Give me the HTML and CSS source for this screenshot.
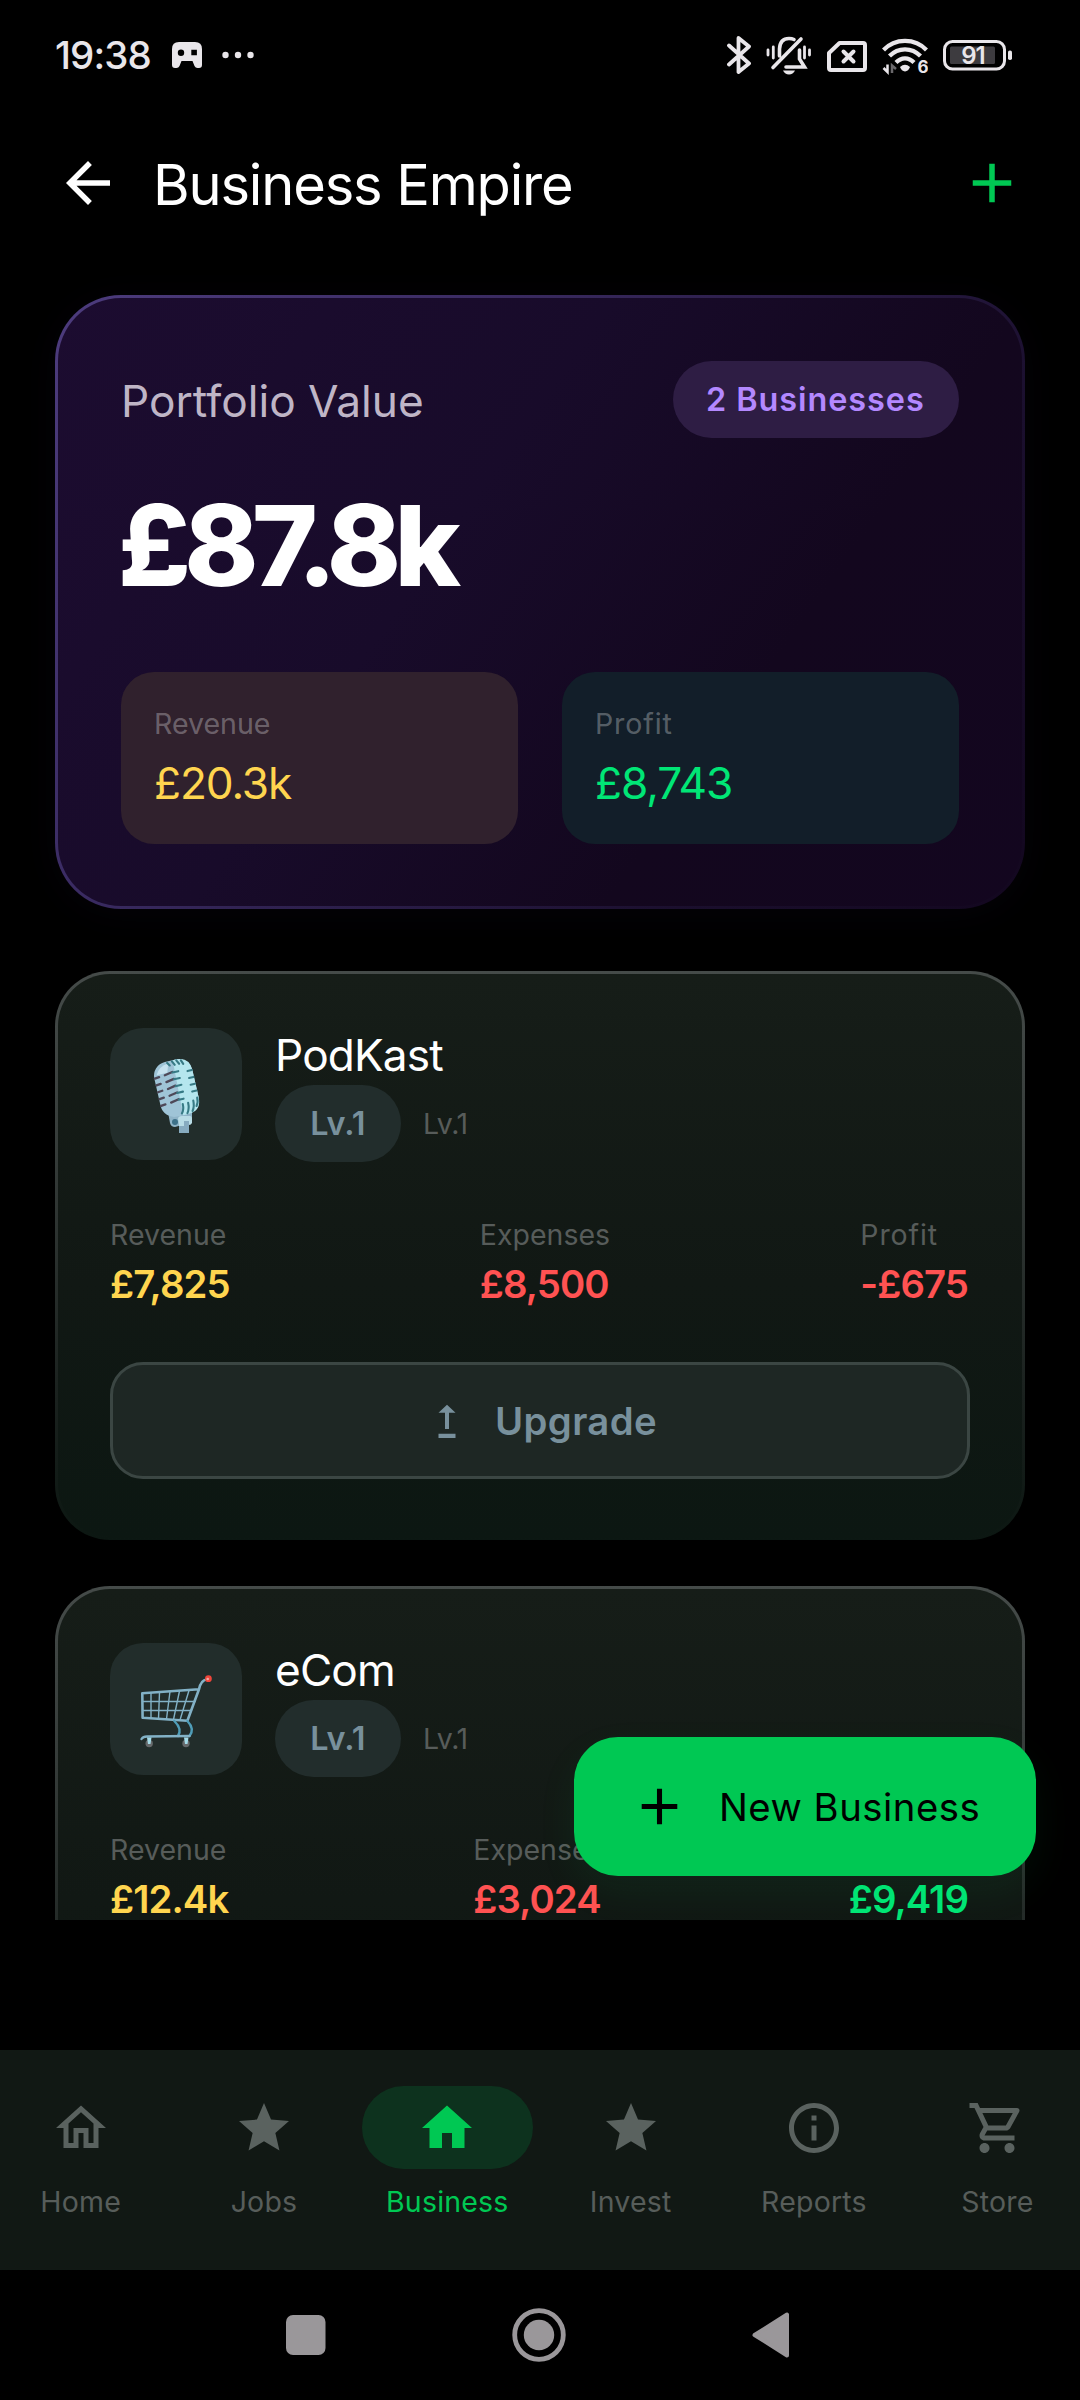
FILE: index.html
```html
<!DOCTYPE html>
<html lang="en">
<head>
<meta charset="utf-8">
<title>Business Empire</title>
<link rel="stylesheet" href="styles.css">
</head>
<body>
<div class="phone">
  <div class="status">
    <span class="clock">19:38</span>
    <svg class="game" width="30" height="26" viewBox="0 0 30 26"><path fill="#e9e6ea" fill-rule="evenodd" d="M7 0H23Q30 0 30 7V23Q30 26 27 26H25.500Q23.500 26 22.500 24L20.500 19H9.500L7.500 24Q6.500 26 4.500 26H3Q0 26 0 23V7Q0 0 7 0ZM9 7.500A3.200 3.200 0 1 0 9 13.900A3.200 3.200 0 1 0 9 7.500ZM19.300 7.700V13.300H24.900V7.700Z"/></svg>
    <svg width="32" height="8" viewBox="0 0 32 8" fill="#e9e6ea"><circle cx="3.500" cy="4" r="3.200"/><circle cx="16" cy="4" r="3.200"/><circle cx="28.500" cy="4" r="3.200"/></svg>
    <div class="status-right">
      <svg width="24" height="60" viewBox="7 0 24 60" fill="none" stroke="#e9e6ea" stroke-width="3.800" stroke-linejoin="round" stroke-linecap="round"><path d="M9 20.500L29 38.500L18.500 47V13L29 21.500L9 39.500"/></svg>
      <svg width="45" height="60" viewBox="46 0 45 60" fill="none" stroke="#e9e6ea" stroke-width="3.600" stroke-linecap="round"><path d="M53 42.500L81 14M59.500 31V24Q60 13.500 69 13.500Q72 13.500 74 14.500M79.500 25V34L84.500 42H66"/><path stroke-width="2.800" d="M48 25V30M53.300 22V33M84.500 22V33M89.500 25V30"/><path fill="#e9e6ea" stroke="none" d="M63 45.500H75Q73 49.500 69 49.500Q65 49.500 63 45.500Z"/></svg>
      <svg width="41" height="60" viewBox="106 0 41 60" fill="none" stroke="#e9e6ea" stroke-width="4" stroke-linejoin="round" stroke-linecap="round"><path d="M119.500 18H143Q145 18 145 20V43Q145 45 143 45H111Q109 45 109 43V28Z"/><path d="M123.500 26.500L133.500 36.500M133.500 26.500L123.500 36.500"/></svg>
      <svg width="46" height="60" viewBox="162 0 46 60" fill="none" stroke="#e9e6ea" stroke-width="4.200"><path d="M163.500 25Q172 15.800 185 15.800Q198 15.800 206.500 25M169.500 31Q176 24.300 185 24.300Q194 24.300 200.500 31M176 37.500Q180 33.300 185 33.300Q190 33.300 194 37.500"/><path fill="#e9e6ea" stroke="none" d="M180 42Q185 37.500 190 42Q188.500 46 185 46.500Q181.500 46 180 42Z"/><path stroke-width="2.500" d="M167.500 39.500V47L163.500 43"/><path stroke="#6a686b" stroke-width="2.500" d="M172 48V40.500L176 44"/><text class="wifi6" x="197.500" y="47.500">6</text></svg>
      <svg width="70" height="60" viewBox="223 0 70 60"><rect x="224.500" y="16.500" width="60" height="27.500" rx="8" fill="none" stroke="#e9e6ea" stroke-width="3"/><rect x="230" y="21.500" width="45" height="17.500" rx="1.500" fill="#3d3b3f"/><rect x="288" y="25.500" width="4" height="9.500" rx="1.800" fill="#e9e6ea"/><text class="batt" x="253" y="39">91</text></svg>
    </div>
  </div>

  <header class="topbar">
    <svg width="66" height="66" viewBox="0 0 24 24" fill="#fff"><path d="M20 11H7.830l5.590-5.590L12 4l-8 8 8 8 1.410-1.410L7.830 13H20z"/></svg>
    <h1 class="title">Business Empire</h1>
    <svg width="66" height="66" viewBox="0 0 24 24" fill="#00c853"><path d="M19 13h-6v6h-2v-6H5v-2h6V5h2v6h6z"/></svg>
  </header>

  <main class="scroll">
    <section class="portfolio">
      <div class="pf-head"><span class="pf-label">Portfolio Value</span><span class="pf-pill">2 Businesses</span></div>
      <div class="pf-value">£87.8k</div>
      <div class="tiles">
        <div class="tile gold"><span class="label">Revenue</span><span class="amount">£20.3k</span></div>
        <div class="tile mint"><span class="label loose">Profit</span><span class="amount">£8,743</span></div>
      </div>
    </section>

    <section class="card">
      <div class="biz">
        <div class="biz-icon">
          <svg width="132" height="132" viewBox="0 0 132 132">
            <path d="M58 84L60 95Q61 99 65 99L72 97V91H82V84Z" fill="#8fb4c8"/>
            <path d="M68 91Q68 88 72 88H80Q82 88 82 91V95Q81 97 79 97V105H69V97Z" fill="#b9dce6"/><path d="M74 93H79V105H69V98H74Z" fill="#87abc0"/><circle cx="65" cy="94" r="3" fill="#3d7189"/>
            <g transform="rotate(-13 66.500 60)">
              <rect x="47" y="32" width="39" height="56" rx="14" fill="#9fc4d7"/>
              <path d="M69 32H72Q86 32 86 46V74Q86 88 72 88H67Z" fill="#b5e6ee"/>
              <path d="M50 43Q54 35 64 34L61 43Z" fill="#c6e2ef"/>
              <g stroke="#4e4858" stroke-width="2.300" stroke-linecap="round"><path d="M47.500 46L52 45.500M47.500 53L52 52.500M47.500 60L52 59.500M47.500 67L52 66.500M47.500 74L52 73.500M58 45L66 43.500M58 52L66 50.500M58 59L66 57.500M58 66L66 64.500M58 73L66 71.500"/></g>
              <g stroke="#377a85" stroke-width="2.100" stroke-linecap="round" fill="none"><path d="M66 44H72M66 51H72M66 58H72M66 65H72M66 72H71M81 46H85.500M81 53H85.500M81 60H85.500M81 67H85.500M68 33L70 37M72.500 33L74.500 37M77 34L78.500 38M63 33.500L65 36.500M66 86Q69 83 69 77M71.500 87Q74.500 83 74.500 77M77 86Q80 82 80 76M82 82Q84.500 79 84.500 74"/></g>
            </g>
          </svg>
        </div>
        <div class="biz-text"><span class="name">PodKast</span><div class="levels"><span class="lv-pill">Lv.1</span><span class="lv">Lv.1</span></div></div>
      </div>
      <div class="stats">
        <div class="stat"><span class="label">Revenue</span><span class="num yellow">£7,825</span></div>
        <div class="stat"><span class="label">Expenses</span><span class="num red">£8,500</span></div>
        <div class="stat"><span class="label loose">Profit</span><span class="num red">-£675</span></div>
      </div>
      <div class="upgrade">
        <svg width="44" height="44" viewBox="0 0 44 44" fill="#78909c"><path d="M22 5.700L30.500 13.700H24V30H20V13.700H13.500ZM13.500 34.800H30.500V39H13.500Z"/></svg>
        <span>Upgrade</span>
      </div>
    </section>

    <section class="card">
      <div class="biz">
        <div class="biz-icon">
          <svg width="132" height="132" viewBox="0 0 132 132" fill="none" stroke="#82b1c6" stroke-linecap="round" stroke-linejoin="round">
            <path stroke-width="2.600" d="M96.500 36.500Q91 37 89 46.300L32.300 50.300L32.600 74.700L77.400 77.700L89 46.300"/>
            <path stroke-width="1.400" d="M41 50V75M49.500 49.500L48.500 75.500M60 48.500L56.500 76M69.500 48L63.500 76.500M79 47.500L70 77M32.500 58.500H85M32.500 67.500H81.500"/>
            <path stroke="#4f9db8" stroke-width="2.400" d="M64.300 78Q72.500 86 68 93M77.400 78Q85 86 79.500 93"/>
            <path stroke-width="2.400" d="M31.500 96Q33 93.500 37 93.500L79.500 93"/>
            <g stroke="none"><circle cx="39.200" cy="100.500" r="3.700" fill="#66696b"/><circle cx="76" cy="100.500" r="3.700" fill="#66696b"/><path fill="#a5dbe8" d="M37 94.500H41.500L40.500 101H38ZM74 94.500H78.500L77.500 101H75Z"/><circle cx="98.400" cy="35.700" r="3.400" fill="#f0453a"/><circle cx="97.700" cy="36" r="1.300" fill="#f3a9a2"/></g>
          </svg>
        </div>
        <div class="biz-text"><span class="name">eCom</span><div class="levels"><span class="lv-pill">Lv.1</span><span class="lv">Lv.1</span></div></div>
      </div>
      <div class="stats">
        <div class="stat"><span class="label">Revenue</span><span class="num yellow">£12.4k</span></div>
        <div class="stat"><span class="label">Expenses</span><span class="num red">£3,024</span></div>
        <div class="stat"><span class="label loose">Profit</span><span class="num green">£9,419</span></div>
      </div>
    </section>
  </main>

  <div class="fab"><svg width="61" height="61" viewBox="0 0 24 24" fill="#000"><path d="M19 13h-6v6h-2v-6H5v-2h6V5h2v6h6z"/></svg><span>New Business</span></div>

  <nav class="tabs">
    <div class="tab"><div class="ind"><svg width="60" height="60" viewBox="0 0 24 24"><path d="M12 5.690l5 4.500V18h-2v-6H9v6H7v-7.810l5-4.500M12 3L2 12h3v8h6v-6h2v6h6v-8h3L12 3z"/></svg></div><span>Home</span></div>
    <div class="tab"><div class="ind"><svg width="60" height="60" viewBox="0 0 24 24"><path d="M12 17.270L18.180 21l-1.640-7.030L22 9.240l-7.190-.61L12 2 9.190 8.630 2 9.240l5.460 4.730L5.820 21z"/></svg></div><span>Jobs</span></div>
    <div class="tab active"><div class="ind"><svg width="60" height="60" viewBox="0 0 24 24"><path d="M10 20v-6h4v6h5v-8h3L12 3 2 12h3v8z"/></svg></div><span>Business</span></div>
    <div class="tab"><div class="ind"><svg width="60" height="60" viewBox="0 0 24 24"><path d="M12 17.270L18.180 21l-1.640-7.030L22 9.240l-7.190-.61L12 2 9.190 8.630 2 9.240l5.460 4.730L5.820 21z"/></svg></div><span>Invest</span></div>
    <div class="tab"><div class="ind"><svg width="60" height="60" viewBox="0 0 24 24"><path d="M11 7h2v2h-2zM11 11h2v6h-2zM12 2C6.480 2 2 6.480 2 12s4.480 10 10 10 10-4.480 10-10S17.520 2 12 2zm0 18c-4.410 0-8-3.590-8-8s3.590-8 8-8 8 3.590 8 8-3.590 8-8 8z"/></svg></div><span>Reports</span></div>
    <div class="tab"><div class="ind"><svg width="60" height="60" viewBox="0 0 24 24"><path d="M15.550 13c.75 0 1.410-.41 1.750-1.030l3.580-6.490c.37-.66-.11-1.480-.87-1.480H5.210l-.94-2H1v2h2l3.600 7.590-1.350 2.440C4.520 15.370 5.480 17 7 17h12v-2H7l1.100-2h7.450zM6.160 6h12.150l-2.760 5H8.530L6.160 6zM7 18c-1.100 0-1.990.9-1.990 2S5.900 22 7 22s2-.9 2-2-.9-2-2-2zm10 0c-1.100 0-1.990.9-1.990 2s.89 2 1.990 2 2-.9 2-2-.9-2-2-2z"/></svg></div><span>Store</span></div>
  </nav>

  <div class="sysnav">
    <svg width="40" height="40" viewBox="0 0 40 40" fill="#9a979a"><rect width="39.500" height="40" rx="7"/></svg>
    <svg width="54" height="54" viewBox="0 0 54 54"><circle cx="27" cy="27" r="24.300" fill="none" stroke="#9a979a" stroke-width="4.800"/><circle cx="27" cy="27" r="15.200" fill="#9a979a"/></svg>
    <svg width="38" height="46" viewBox="0 0 38 46"><path d="M35 2.500V43.500L2.500 23Z" fill="#9a979a" stroke="#9a979a" stroke-width="4" stroke-linejoin="round"/></svg>
  </div>
</div>
</body>
</html>
```
FILE: styles.css
```css
* { box-sizing: border-box; }
body { margin: 0; background: #000; font-family: Inter, sans-serif; color: #fff; }
svg { display: block; flex: none; }
span, h1 { white-space: nowrap; }
.phone { position: relative; width: 1080px; height: 2400px; overflow: hidden; display: flex; flex-direction: column; background: #000; }

.status { height: 110px; padding: 0 67px 0 55px; display: flex; align-items: center; }
.clock { font-size: 38.5px; font-weight: 500; letter-spacing: -.9px; color: #e9e6ea; width: 117px; line-height: 50px; }
.game { margin-right: 20px; }
.status-right { margin-left: auto; display: flex; gap: 15px; }
.wifi6 { font: 700 17px Inter, sans-serif; fill: #e9e6ea; stroke: none; }
.batt { font: 600 24px Inter, sans-serif; letter-spacing: -1px; fill: #e9e6ea; text-anchor: middle; }

.topbar { height: 146px; padding: 0 55px; display: flex; align-items: center; }
.title { margin: 0 auto 0 32px; padding-top: 3px; font-size: 56px; font-weight: 400; letter-spacing: -1.15px; line-height: 80px; }

.scroll { height: 1664px; padding: 39px 55px 0; overflow: hidden; }

.portfolio { height: 614px; padding: 63px; border: 3px solid transparent; border-radius: 66px; background: linear-gradient(125deg, #1c0c30 0%, #180b2a 40%, #13071e 70%, #13061f 100%) padding-box, linear-gradient(125deg, #4d3c7e 0%, #3b2c64 30%, #1b0f2e 75%, #13071f 100%) border-box; box-shadow: 0 4px 40px rgba(110, 70, 220, .045); }
.pf-head { height: 77px; display: flex; align-items: center; justify-content: space-between; }
.pf-label { font-size: 44.2px; letter-spacing: 0; color: #bfb5c6; line-height: 60px; padding-top: 3px; }
.pf-pill { height: 77px; width: 286px; padding-left: 33px; border-radius: 39px; background: #2e1d44; color: #b388ff; font-size: 32.4px; font-weight: 600; letter-spacing: .95px; line-height: 77px; }
.pf-value { margin: 42px 0 62px -3px; font-size: 112px; font-weight: 800; letter-spacing: -6.6px; line-height: 130px; white-space: nowrap; }
.tiles { display: grid; grid-template-columns: 1fr 1fr; gap: 44px; }
.tile { height: 172px; padding: 30px 33px 0; border-radius: 33px; display: flex; flex-direction: column; gap: 7px; }
.tile .label { color: rgba(255, 255, 255, .3); }
.gold { background: #30212d; }
.gold .amount { color: #ffd54f; }
.mint { background: #121e29; }
.mint .amount { color: #00e676; }
.label { font-size: 28.5px; line-height: 44px; color: #575c5a; }
.loose { letter-spacing: .9px; }
.amount { font-size: 44.2px; letter-spacing: -1.1px; line-height: 60px; }

.card { height: 569px; margin-top: 46px; padding: 54px 52px; border: 3px solid transparent; border-radius: 55px; background: linear-gradient(180deg, #161d18 0%, #111814 55%, #0c1712 100%) padding-box, linear-gradient(180deg, #454b49 0%, #363c3a 30%, #1a211e 75%, #0c1712 100%) border-box; }
.portfolio + .card { margin-top: 62px; }
.biz { height: 133px; display: flex; gap: 33px; }
.biz-icon { width: 132px; height: 132px; border-radius: 33px; background: #222d2b; }
.biz-text { margin-top: -3px; display: flex; flex-direction: column; }
.name { padding-top: 2px; font-size: 44.2px; letter-spacing: -.85px; line-height: 57px; }
.levels { display: flex; align-items: center; gap: 22px; }
.lv-pill { width: 126px; height: 77px; border-radius: 39px; background: #222d2c; color: #78909c; font-size: 32.4px; font-weight: 600; letter-spacing: .1px; line-height: 78px; text-align: center; }
.lv { font-size: 28.5px; letter-spacing: -.4px; color: #575c5a; line-height: 77px; padding-top: 1px; }
.stats { margin-top: 52px; padding-right: 2px; display: flex; justify-content: space-between; }
.stat { display: flex; flex-direction: column; }
.num { padding-top: 1px; font-size: 38.3px; font-weight: 600; letter-spacing: -.9px; line-height: 53px; }
.yellow { color: #ffd54f; }
.red { color: #ff5252; }
.green { color: #00e676; }
.upgrade { margin-top: 51px; height: 117px; border: 3px solid #3b4643; border-radius: 33px; background: #1e2724; color: #78909c; display: flex; align-items: center; justify-content: center; gap: 26px; padding-left: 2px; font-size: 38.3px; font-weight: 600; letter-spacing: .38px; line-height: 54px; }

.fab { position: absolute; left: 574px; top: 1737px; width: 462px; height: 139px; padding-left: 55px; border-radius: 44px; background: #00c853; color: #000; display: flex; align-items: center; gap: 29px; font-size: 38.3px; letter-spacing: .5px; box-shadow: 0 16px 40px rgba(0, 200, 83, .07); }

.tabs { margin-top: 130px; height: 220px; padding: 36px 2px 0 0; background: #111814; display: flex; gap: 22px; }
.tab { flex: 1 1 0; min-width: 0; display: flex; flex-direction: column; align-items: center; color: #575d5a; font-size: 28.5px; letter-spacing: .2px; line-height: 44px; }
.ind { width: 171px; height: 83px; margin-bottom: 11px; border-radius: 42px; display: flex; align-items: center; justify-content: center; }
.ind svg { fill: #5a625f; }
.active { color: #00c853; }
.active .ind { background: #0d321e; }
.active .ind svg { fill: #00c853; }

.sysnav { height: 130px; padding: 0 290px 0 286px; display: flex; align-items: center; justify-content: space-between; }
```
